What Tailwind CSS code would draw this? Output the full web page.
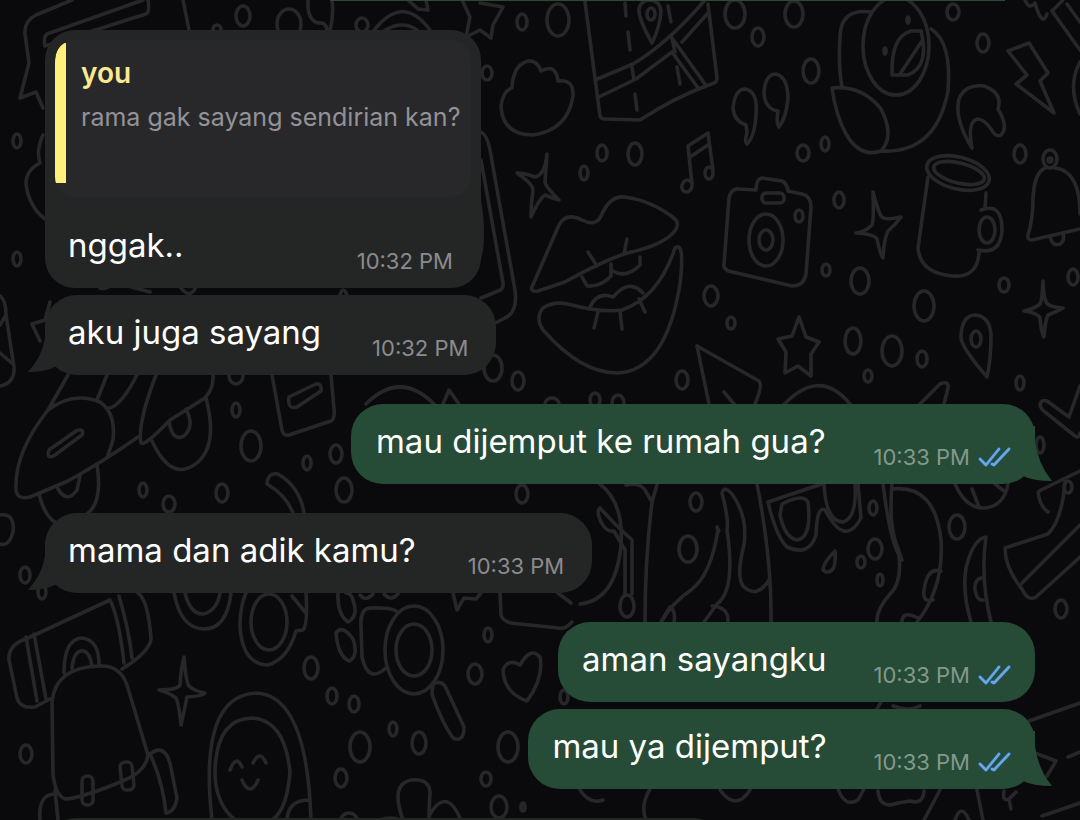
<!DOCTYPE html>
<html lang="id">
<head>
<meta charset="utf-8">
<meta name="viewport" content="width=device-width, initial-scale=1">
<title>Chat</title>
<script src="https://cdn.jsdelivr.net/npm/@tailwindcss/browser@4"></script>
</head>
<body class="bg-[#0a0a0c] font-['Inter','Liberation_Sans',sans-serif]">
<main class="relative h-dvh overflow-hidden">
  <!-- Doodle wallpaper -->
  <svg class="absolute inset-0 h-[820px] w-[1080px]" viewBox="0 0 1080 820" fill="none" stroke="#272729" stroke-width="3.6" stroke-linecap="round" stroke-linejoin="round" aria-hidden="true">
    <!-- banner, cloud and phone -->
    <path d="M72 0L36 15Q24 21 25 34L29 63L20 98L36 92L43 108M143 0L47 34Q43 37 45 46L146 14Q150 12 148 0M183 0L189 30M308 0Q307 20 318 23Q326 22 327 30M332 0Q334 16 330 30M372 33Q402-8 430 30M385 30Q403 20 417 30M408 0L418 9L428 10L426 0"/>
    <path d="M463 2L470 17L466 37L480 30L491 38L493 25L503 7L480 3M43 135Q36 150 40 163Q26 170 26 184Q29 207 45 219M481 132Q487 135 490 150L515 290Q518 312 505 318L495 323M481 160L503 283Q504 289 498 291L481 298"/>
    <path d="M512 88Q513 65 528 61Q537 60 541 71Q556 63 558 81Q574 79 573 96Q568 130 533 135Q503 135 501 107Q502 93 511 88Z"/>
    <path d="M547 154Q545 175 535 177Q525 173 517 173Q533 184 533 190Q531 203 531 217Q539 199 545 195Q552 198 559 200Q545 186 545 182Q546 167 547 154Z"/>
    <!-- folded map -->
    <path d="M585 2L600 116Q601 119 605 119L640 120Q675 97 714 83Q717 82 717 78L708 4M595 80L633 64Q668 43 705 0M599 97L636 79L672 52L698 88M672 38L675 52M672 38L705 84M682 42L708 13M625 3L626 16M628 32L630 50M632 67L634 80M635 94L637 110M668 6L671 22M677 67L680 84M652 43Q638 18 639 9Q641 0 650 0Q660 1 661 11Q660 27 652 43Z"/>
    <ellipse cx="651" cy="14" rx="4" ry="6"/>
    <path d="M746 125Q734 121 733 108Q735 89 745 89Q758 91 756 114Q755 136 747 144Q744 142 747 133ZM778 111Q765 109 764 93Q765 74 776 74Q788 77 788 99Q786 118 779 127Q776 123 778 111Z"/>
    <path d="M692 184L688 146L708 133L713 170M690 157L708 145"/><ellipse cx="687" cy="186" rx="5" ry="6" transform="rotate(20 687 186)"/><ellipse cx="709" cy="173" rx="4" ry="6"/>
    <!-- avocado and leaf -->
    <path d="M871 12Q841 8 840 36Q838 66 842 87M832 88Q862 85 881 109Q895 136 881 151Q860 158 846 134Q836 116 832 88ZM881 151Q936 154 948 91Q952 42 931 29M892 75Q891 36 911 31L921 31Q930 66 908 75ZM900 74L922 41"/>
    <ellipse cx="896" cy="46" rx="33" ry="49"/><ellipse cx="908" cy="20" rx="1" ry="3"/><ellipse cx="885" cy="51" rx="1" ry="3"/>
    <path d="M972 148Q954 119 959 99Q965 84 984 86Q1003 93 998 109Q1009 127 1001 135Q996 138 991 129Q984 119 977 119Q967 122 972 148ZM1008 51L1029 43L1048 73L1040 81L1054 113L1016 84L1027 75ZM1025 0Q1029 10 1035 3M1035 3Q1042 28 1047 14M1063 0L1052 11L1080 50M1067 4L1080 22M1080 62Q1067 86 1080 114"/>
    <!-- mug and bell -->
    <ellipse cx="958" cy="173" rx="32" ry="16" transform="rotate(14 958 173)"/><ellipse cx="959" cy="173" rx="26" ry="10" transform="rotate(14 959 173)"/>
    <path d="M928 177L918 248Q920 273 952 276Q978 278 979 252M986 193L985 208"/><ellipse cx="987" cy="230" rx="8" ry="13"/><path d="M981 210Q1002 202 1002 230Q1001 255 978 250"/>
    <path d="M1045 168Q1034 173 1033 199Q1033 219 1028 235Q1027 240 1032 240L1080 229M1055 168Q1080 171 1080 214M1050 236Q1052 247 1060 244Q1065 241 1063 233"/><ellipse cx="1050" cy="159" rx="7" ry="9"/><circle cx="1050" cy="160" r="2"/>
    <!-- camera -->
    <path d="M724 264L729 198Q731 188 739 189L756 190Q756 179 762 178L782 181Q787 183 788 191L802 194Q811 196 811 207L806 274Q804 286 792 286L728 271Q723 268 724 264Z"/><ellipse cx="766" cy="240" rx="17" ry="26"/><ellipse cx="766" cy="240" rx="7" ry="10"/><ellipse cx="799" cy="216" rx="4" ry="6"/><rect x="762" y="193" width="22" height="10" rx="4"/>
    <path d="M873 192Q874 220 872 225Q865 232 856 233Q874 234 877 239Q880 254 883 258Q884 239 888 231Q896 224 901 217Q884 221 881 216Q877 208 873 192Z"/>
    <path d="M1043 281Q1042 301 1040 304Q1034 309 1024 311Q1038 313 1040 318Q1041 332 1044 337Q1045 321 1048 315Q1058 311 1063 308Q1048 307 1046 302Q1043 294 1043 281ZM799 317L806 337L819 342L811 354L811 376L798 366L785 373L786 352L778 339L792 336ZM987 377Q962 348 961 338Q961 315 976 315Q990 317 991 335Q991 360 987 377ZM780 409Q818 365 850 404M920 404L940 384Q949 380 948 388L944 404"/><ellipse cx="976" cy="339" rx="5" ry="8"/>
    <!-- lips -->
    <path d="M532 287L559 225Q566 212 582 220Q596 227 601 216Q610 195 625 197Q653 201 675 219Q681 225 672 234Q660 246 627 253Q600 262 565 282L538 291Q530 292 532 287ZM543 308Q535 318 543 330Q581 373 617 373Q666 371 680 284Q685 240 675 248Q659 297 622 310Q600 313 568 304Q553 301 543 308ZM588 252L597 266M627 239L624 254M582 277L587 286Q601 287 611 276L611 264M613 271Q626 279 640 265L640 257M590 307Q597 291 613 297Q629 278 643 293M598 312L594 328M620 311L622 329M639 299L645 312"/>
    <path d="M697 346L759 381Q763 385 755 404M697 346L709 404M724 392L734 404"/>
    <!-- planet, rocket and luggage tag -->
    <path d="M0 296Q6 300 6 315L14 367Q15 383 0 386M0 325L6 315M0 353L13 364M50 302L45 320L32 324L40 341M100 288Q106 290 112 284M128 286L150 292M180 287Q190 300 196 287M340 295Q343 285 347 295M68 375L48 410M107 375L97 400M137 375Q121 406 109 408M48 410Q14 453 16 490Q17 500 30 497L68 481Q101 463 138 437M48 410Q73 391 100 402Q116 413 113 440L108 455M49 450L76 431Q85 428 82 435L55 455Q46 460 49 450ZM39 494Q45 520 62 526M97 465Q103 502 87 514M58 489Q67 504 77 490L80 476M156 375Q137 425 141 443Q144 447 170 420L205 398Q214 388 213 375M206 398Q218 444 198 462Q172 484 152 441M169 421Q172 442 184 436Q195 426 186 409M272 375L282 430Q283 436 289 435L331 421Q335 419 334 409L331 375M289 397L316 384Q322 383 321 391L297 407Q287 410 289 397ZM267 484Q268 472 278 474Q300 487 304 513M267 484Q286 495 293 513M0 515Q15 513 13 532Q9 547 0 544M366 404Q400 370 434 404M443 404L449 390L459 404"/>
    <!-- check mark -->
    <path d="M1080 386L1069 417L1047 401Q1042 399 1040 404Q1040 408 1045 412L1075 436Q1079 439 1080 433"/>
    <!-- flowers, goggles and slippers -->
    <path d="M600 484Q624 503 621 545Q616 600 580 604M615 524L600 508Q596 511 601 522Q607 533 614 531L625 550L625 594M615 524L632 540L632 594M626 485Q640 482 645 490L652 502L657 485M652 502Q645 560 645 622M757 484Q772 560 771 622M722 493Q724 485 732 494Q748 516 744 545Q736 575 743 586Q758 600 770 578M722 493Q729 520 727 530Q736 590 717 604L704 622M717 527Q720 533 718 530Q711 575 691 590Q673 602 661 622M661 622L670 607Q676 611 674 622M712 606Q729 607 728 622M768 502L822 484M768 502Q776 536 787 547Q809 557 816 535Q817 505 825 510Q845 548 861 518L858 484M782 504Q803 493 808 502Q812 538 797 540Q785 538 780 515ZM824 484Q826 522 843 522Q857 518 855 484M823 570Q823 563 835 551Q837 573 826 572ZM883 484Q890 540 899 555Q902 583 890 594Q876 610 877 622M892 484Q889 520 895 540L902 560M892 489Q935 484 941 540Q944 588 917 622M941 571Q927 567 924 590Q922 603 933 600M902 622Q902 610 918 618M955 484Q966 509 985 508Q1004 506 1008 484M972 489L979 507M995 484L1004 491M971 622Q962 592 966 568Q973 539 986 537Q980 578 991 622M981 578Q974 580 975 590Q977 601 983 600M1080 471L1041 490Q1037 491 1039 497Q1041 507 1048 512M1065 482Q1062 520 1048 534L1005 548Q1005 568 1022 589Q1028 602 1036 597L1080 557M1022 583L1080 525"/>
    <!-- backpack -->
    <path d="M110 600L28 638Q8 644 9 660L17 698Q20 709 35 707L50 699M26 637L37 701M34 634L46 699M110 600Q119 618 124 663M119 596Q129 630 132 658M138 593Q148 600 151 638Q151 651 122 669M64 673Q64 639 82 638Q99 640 99 664M72 668Q74 649 84 651Q90 653 92 666M52 702Q55 667 100 666Q120 665 127 685L148 755Q146 771 125 780Q85 797 66 799Q56 797 53 775ZM150 754Q164 743 170 763L177 798Q175 812 166 813Q163 782 150 754M55 790L58 820M54 794Q38 795 40 820"/><rect x="82" y="776" width="11" height="29" rx="5"/><rect x="121" y="762" width="12" height="28" rx="5" transform="rotate(-6 127 776)"/>
    <path d="M184 657Q186 682 189 686Q194 691 205 693Q203 696 187 697Q184 712 181 725Q179 704 176 698Q170 693 159 690Q177 690 180 685Q181 669 184 657Z"/>
    <!-- smiling egg, rings and paw -->
    <path d="M212 820Q198 696 256 693Q307 695 311 820M215 775Q215 719 252 718Q285 720 290 772Q287 810 272 820M235 820Q216 804 215 775M230 770Q236 754 242 767M253 763Q260 749 266 763M242 780Q250 798 258 780M287 820Q288 800 309 800M174 593Q181 629 204 629Q227 629 231 593M185 593Q190 614 203 614Q217 611 220 593M246 593Q240 606 240 626Q242 664 268 665Q288 659 296 631L303 630Q308 625 306 593M292 596L305 612M338 593Q337 614 348 622Q359 616 353 600Q351 593 346 593M336 633Q342 624 353 639Q359 656 349 661Q338 656 336 633Z"/>
    <ellipse cx="269" cy="622" rx="18" ry="28"/>
    <path d="M360 595Q366 602 373 594M384 594Q391 602 398 594M398 613Q395 607 370 608Q360 609 361 626L362 657Q368 684 386 668M453 593L457 610L464 598L476 599L481 593M500 593L501 615Q504 624 520 624L558 628Q565 630 572 622M558 593L571 603M503 670Q508 658 520 665Q531 646 540 657Q544 678 527 701Q504 693 503 670ZM433 684Q440 680 445 686L464 727Q464 743 453 738Q441 721 432 694ZM403 820Q390 784 411 780Q429 778 430 792Q429 810 429 820M429 816Q446 785 461 820M380 820Q390 816 400 820"/>
    <ellipse cx="414" cy="650" rx="29" ry="44"/><ellipse cx="414" cy="650" rx="18" ry="26"/>
    <!-- lower right edges -->
    <path d="M877 709L881 702M893 706Q908 712 920 706M1029 721L1080 703M1035 753L1056 761L1047 776M1068 757L1080 752M838 789Q845 808 858 800L864 789M878 791Q880 810 898 803L910 801Q923 805 924 791M940 790L924 820M977 790L983 820M1004 791Q1002 802 1009 799L1011 809M1009 799L1016 792M1042 816L1080 803M955 820Q961 802 969 820M650 789Q640 806 646 820M720 790Q736 812 750 790M580 790Q590 805 603 800"/>
    <!-- bubbles and dots -->
    <g>
      <ellipse cx="243" cy="16" rx="7" ry="10"/><ellipse cx="289" cy="24" rx="12" ry="15"/><ellipse cx="217" cy="29" rx="4" ry="4"/><ellipse cx="362" cy="25" rx="6" ry="7"/><ellipse cx="522" cy="22" rx="5" ry="8"/><ellipse cx="558" cy="20" rx="11" ry="16"/><ellipse cx="487" cy="73" rx="5" ry="7"/><ellipse cx="17" cy="141" rx="4" ry="7"/><ellipse cx="17" cy="259" rx="4" ry="7"/><ellipse cx="735" cy="14" rx="10" ry="14"/><ellipse cx="758" cy="37" rx="6" ry="9"/><ellipse cx="794" cy="14" rx="9" ry="13"/><ellipse cx="811" cy="71" rx="8" ry="12"/><ellipse cx="953" cy="12" rx="6" ry="8"/><ellipse cx="983" cy="43" rx="6" ry="9"/><ellipse cx="602" cy="153" rx="5" ry="8"/><ellipse cx="635" cy="154" rx="7" ry="11"/><ellipse cx="584" cy="173" rx="4" ry="7"/><ellipse cx="803" cy="153" rx="6" ry="8"/><ellipse cx="825" cy="144" rx="4" ry="7"/><ellipse cx="1020" cy="154" rx="6" ry="9"/><ellipse cx="839" cy="200" rx="5" ry="8"/><ellipse cx="826" cy="270" rx="4" ry="6"/><ellipse cx="860" cy="281" rx="9" ry="13"/><ellipse cx="924" cy="306" rx="10" ry="15"/><ellipse cx="1004" cy="285" rx="5" ry="7"/><ellipse cx="1073" cy="277" rx="5" ry="8"/><ellipse cx="853" cy="341" rx="8" ry="13"/><ellipse cx="892" cy="351" rx="10" ry="15"/><ellipse cx="922" cy="359" rx="5" ry="8"/><ellipse cx="868" cy="376" rx="4" ry="6"/><ellipse cx="1020" cy="383" rx="4" ry="7"/><ellipse cx="711" cy="296" rx="7" ry="10"/><ellipse cx="731" cy="323" rx="4" ry="6"/><ellipse cx="682" cy="380" rx="6" ry="9"/><ellipse cx="493" cy="368" rx="9" ry="13"/><ellipse cx="518" cy="381" rx="6" ry="9"/><ellipse cx="552" cy="404" rx="7" ry="6"/><ellipse cx="595" cy="400" rx="5" ry="7"/><ellipse cx="618" cy="403" rx="6" ry="8"/>
      <ellipse cx="236" cy="376" rx="7" ry="8"/><ellipse cx="236" cy="410" rx="4" ry="7"/><ellipse cx="251" cy="446" rx="10" ry="15"/><ellipse cx="307" cy="463" rx="4" ry="7"/><ellipse cx="336" cy="454" rx="6" ry="9"/><ellipse cx="344" cy="490" rx="8" ry="12"/><ellipse cx="222" cy="493" rx="6" ry="9"/><ellipse cx="143" cy="490" rx="4" ry="7"/><ellipse cx="169" cy="504" rx="6" ry="8"/><ellipse cx="25" cy="575" rx="5" ry="8"/><ellipse cx="42" cy="592" rx="4" ry="7"/><ellipse cx="696" cy="502" rx="6" ry="9"/><ellipse cx="688" cy="549" rx="9" ry="13"/><ellipse cx="627" cy="606" rx="7" ry="11"/><ellipse cx="873" cy="508" rx="4" ry="7"/><ellipse cx="875" cy="549" rx="7" ry="10"/><ellipse cx="861" cy="562" rx="4" ry="6"/><ellipse cx="880" cy="580" rx="3" ry="6"/><ellipse cx="957" cy="527" rx="8" ry="12"/><ellipse cx="1061" cy="609" rx="6" ry="9"/><ellipse cx="1068" cy="487" rx="4" ry="6"/><ellipse cx="1040" cy="445" rx="4" ry="8"/><ellipse cx="26" cy="754" rx="6" ry="9"/><ellipse cx="311" cy="668" rx="7" ry="11"/><ellipse cx="332" cy="696" rx="5" ry="8"/><ellipse cx="354" cy="704" rx="5" ry="8"/><ellipse cx="360" cy="747" rx="10" ry="15"/><ellipse cx="393" cy="729" rx="4" ry="7"/><ellipse cx="419" cy="743" rx="7" ry="11"/><ellipse cx="341" cy="778" rx="6" ry="9"/><ellipse cx="488" cy="635" rx="4" ry="7"/><ellipse cx="475" cy="674" rx="7" ry="10"/><ellipse cx="508" cy="747" rx="10" ry="15"/><ellipse cx="486" cy="779" rx="5" ry="7"/><ellipse cx="499" cy="807" rx="8" ry="11"/><ellipse cx="523" cy="807" rx="2" ry="4"/><ellipse cx="564" cy="697" rx="4" ry="7"/><ellipse cx="522" cy="494" rx="6" ry="9"/><ellipse cx="349" cy="820" rx="8" ry="7"/>
    </g>
  </svg>

  <div class="relative flex flex-col items-start pr-[45px] pl-[45px]">
    <div class="mr-[30px] h-px w-[675px] self-end bg-[#264b37]"></div>

    <article class="relative mt-[29px] min-h-[258px] rounded-[30px] bg-[#242625] px-[10px] pt-[10px]">
      <svg class="absolute top-[170px] right-[-3px] h-[75px] w-[10px]" viewBox="0 0 10 75" fill="#242625" aria-hidden="true"><path d="M0 0H7Q10 16 10 34Q10 55 4 68L0 75Z"/></svg>
      <blockquote class="relative h-[157px] w-[416px] overflow-hidden rounded-[20px] bg-[#28282a] pt-[17px] pl-[26px]">
        <div class="absolute top-[3px] left-0 h-[140px] w-[11px] rounded-tl-[11px_20px] bg-[#fff07c]"></div>
        <p class="text-[28px] leading-8 font-semibold text-[#fbe892]">you</p>
        <p class="mt-3 text-[25px] leading-8 whitespace-nowrap text-[#929297]">rama gak sayang sendirian kan?</p>
      </blockquote>
      <div class="relative flex items-start justify-between pt-[26px] pr-[18px] pl-[13px]">
        <p class="text-[33px] leading-[44px] text-white">nggak..</p>
        <time class="pt-[24px] text-[22px] leading-7 text-[#8b8b8f]">10:32 PM</time>
      </div>
    </article>

    <article class="relative mt-[7px] flex h-[80px] items-start gap-[51px] rounded-[32px] bg-[#242625] pt-[15px] pr-[28px] pl-[23px] whitespace-nowrap">
      <svg class="absolute bottom-[2px] left-[-17px] h-[50px] w-[34px]" viewBox="0 0 34 50" fill="#242625" aria-hidden="true"><path d="M17 0V15Q14 34 0 49Q18 49 29 43L34 30V0Z"/></svg>
      <p class="relative text-[33px] leading-[44px] text-white">aku juga sayang</p>
      <time class="pt-[24px] text-[22px] leading-7 text-[#8b8b8f]">10:32 PM</time>
    </article>

    <article class="relative mt-[29px] flex h-[80px] items-start gap-[48px] self-end rounded-[32px] bg-[#264b37] pt-[15px] pr-[24px] pl-[25px] whitespace-nowrap">
      <svg class="absolute right-[-17px] bottom-[2px] h-[56px] w-[34px]" viewBox="0 0 34 56" fill="#264b37" aria-hidden="true"><path d="M0 0H17V15Q20 38 34 55Q15 55 5 50L0 36Z"/></svg>
      <p class="relative text-[33px] leading-[44px] text-white">mau dijemput ke rumah gua?</p>
      <div class="relative flex items-center gap-2 pt-[24px]">
        <time class="text-[22px] leading-7 text-[#84998d]">10:33 PM</time>
        <svg class="h-[22px] w-[33px]" viewBox="0 0 33 22" fill="none" stroke-linecap="round" stroke-linejoin="round" role="img" aria-label="Dibaca"><g stroke="#235780" stroke-width="4"><path d="M2 13L8 19L21 3M14 18L16 19L31 3"/></g><g stroke="#6aa9dc" stroke-width="2.6"><path d="M2 13L8 19L21 3M14 18L16 19L31 3"/></g></svg>
      </div>
    </article>

    <article class="relative mt-[29px] flex h-[80px] items-start gap-[52px] rounded-[32px] bg-[#242625] pt-[15px] pr-[28px] pl-[23px] whitespace-nowrap">
      <svg class="absolute bottom-[2px] left-[-17px] h-[50px] w-[34px]" viewBox="0 0 34 50" fill="#242625" aria-hidden="true"><path d="M17 0V15Q14 34 0 49Q18 49 29 43L34 30V0Z"/></svg>
      <p class="relative text-[33px] leading-[44px] text-white">mama dan adik kamu?</p>
      <time class="pt-[24px] text-[22px] leading-7 text-[#8b8b8f]">10:33 PM</time>
    </article>

    <article class="relative mt-[29px] flex h-[80px] items-start gap-[47px] self-end rounded-[32px] bg-[#264b37] pt-[15px] pr-[24px] pl-[24px] whitespace-nowrap">
      <p class="text-[33px] leading-[44px] text-white">aman sayangku</p>
      <div class="flex items-center gap-2 pt-[24px]">
        <time class="text-[22px] leading-7 text-[#84998d]">10:33 PM</time>
        <svg class="h-[22px] w-[33px]" viewBox="0 0 33 22" fill="none" stroke-linecap="round" stroke-linejoin="round" role="img" aria-label="Dibaca"><g stroke="#235780" stroke-width="4"><path d="M2 13L8 19L21 3M14 18L16 19L31 3"/></g><g stroke="#6aa9dc" stroke-width="2.6"><path d="M2 13L8 19L21 3M14 18L16 19L31 3"/></g></svg>
      </div>
    </article>

    <article class="relative mt-[7px] flex h-[80px] items-start gap-[47px] self-end rounded-[32px] bg-[#264b37] pt-[15px] pr-[24px] pl-[24px] whitespace-nowrap">
      <svg class="absolute right-[-17px] bottom-[2px] h-[56px] w-[34px]" viewBox="0 0 34 56" fill="#264b37" aria-hidden="true"><path d="M0 0H17V15Q20 38 34 55Q15 55 5 50L0 36Z"/></svg>
      <p class="relative text-[33px] leading-[44px] text-white">mau ya dijemput?</p>
      <div class="relative flex items-center gap-2 pt-[24px]">
        <time class="text-[22px] leading-7 text-[#84998d]">10:33 PM</time>
        <svg class="h-[22px] w-[33px]" viewBox="0 0 33 22" fill="none" stroke-linecap="round" stroke-linejoin="round" role="img" aria-label="Dibaca"><g stroke="#235780" stroke-width="4"><path d="M2 13L8 19L21 3M14 18L16 19L31 3"/></g><g stroke="#6aa9dc" stroke-width="2.6"><path d="M2 13L8 19L21 3M14 18L16 19L31 3"/></g></svg>
      </div>
    </article>

    <div class="mt-[29px] h-[80px] w-[680px] rounded-[32px] bg-[#242625]"></div>
  </div>
</main>
</body>
</html>
